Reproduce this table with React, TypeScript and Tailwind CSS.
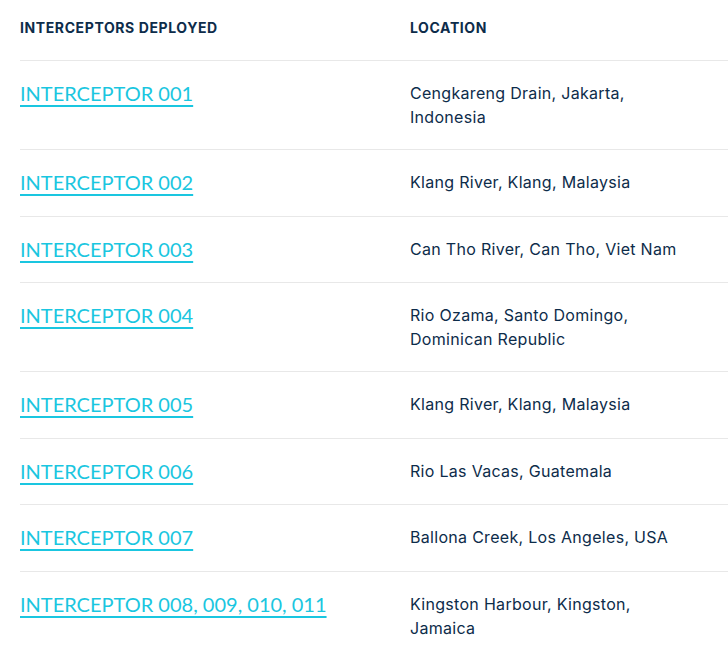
const rows = [
  { name: 'INTERCEPTOR 001', location: 'Cengkareng Drain, Jakarta, Indonesia' },
  { name: 'INTERCEPTOR 002', location: 'Klang River, Klang, Malaysia' },
  { name: 'INTERCEPTOR 003', location: 'Can Tho River, Can Tho, Viet Nam' },
  { name: 'INTERCEPTOR 004', location: 'Rio Ozama, Santo Domingo, Dominican Republic' },
  { name: 'INTERCEPTOR 005', location: 'Klang River, Klang, Malaysia' },
  { name: 'INTERCEPTOR 006', location: 'Rio Las Vacas, Guatemala' },
  { name: 'INTERCEPTOR 007', location: 'Ballona Creek, Los Angeles, USA' },
  { name: 'INTERCEPTOR 008, 009, 010, 011', location: 'Kingston Harbour, Kingston, Jamaica' },
];

export default function App() {
  return (
    <div className="min-h-[651px] bg-white pl-5 font-['Inter','Noto_Sans',sans-serif] text-[#0d2c4a]">
      <div className="grid grid-cols-[390px_1fr] border-b border-[#e8e8e8] pt-[18px] pb-[22px] text-sm font-bold leading-5 tracking-[0.6px]">
        <div>INTERCEPTORS DEPLOYED</div>
        <div>LOCATION</div>
      </div>
      {rows.map((row) => (
        <div
          key={row.name}
          className="grid grid-cols-[390px_1fr] border-b border-[#e8e8e8] py-5"
        >
          <div className="leading-[25.5px]">
            <a
              href="#"
              className="block w-fit font-['Lato',sans-serif] text-[20px] leading-[25.5px] text-[#1ac6e0] underline decoration-2 underline-offset-[4px]"
            >
              {row.name}
            </a>
          </div>
          <div className="max-w-[272px] text-base leading-6 tracking-[0.3px]">{row.location}</div>
        </div>
      ))}
    </div>
  );
}
